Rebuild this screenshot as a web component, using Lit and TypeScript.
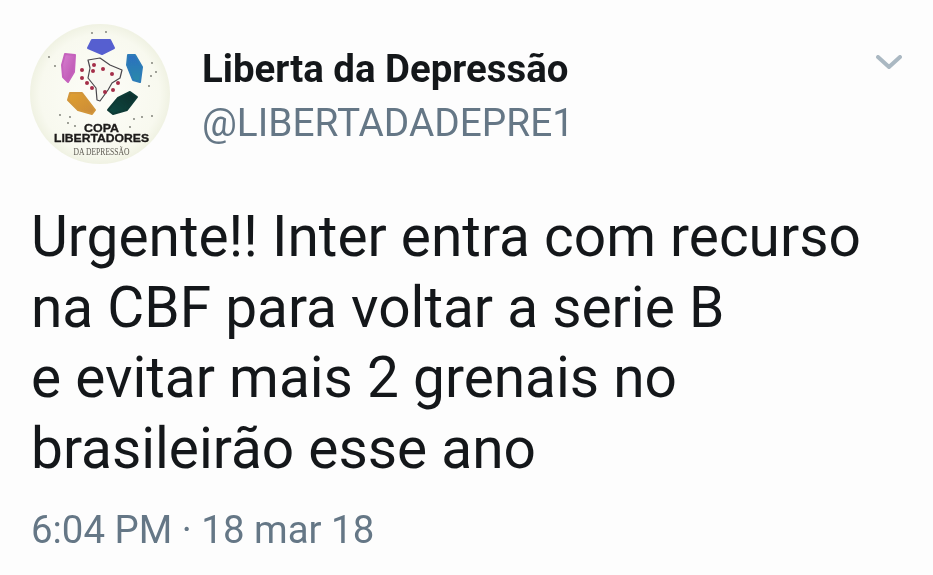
import { LitElement, html, css, svg } from "lit";
import { customElement } from "lit/decorators.js";

const stars: [number, number][] = [
  [64, 41], [63, 47], [73, 45], [82, 50], [52, 46], [52, 54], [57, 59], [62, 64], [88, 59], [83, 66], [75, 68],
];
const specks: [number, number][] = [
  [62, 9], [76, 8], [19, 33], [25, 42], [122, 39], [121, 52], [126, 48], [119, 62], [30, 91], [40, 93], [38, 99],
  [104, 95], [112, 93], [122, 92], [45, 102], [100, 103],
];

const avatar = svg`
<svg class="avatar" viewBox="0 0 140 140" width="140" height="140">
  <defs>
    <radialGradient id="bg" cx="0.5" cy="0.5" r="0.5">
      <stop offset="0" stop-color="#fdfdf8"/><stop offset="0.85" stop-color="#f8f9ef"/><stop offset="1" stop-color="#f0f2e3"/>
    </radialGradient>
    <filter id="soft" x="-10%" y="-10%" width="120%" height="120%"><feGaussianBlur stdDeviation="0.7"/></filter>
    <linearGradient id="mg" x1="0" y1="0" x2="1" y2="1"><stop offset="0" stop-color="#d77fd0"/><stop offset="1" stop-color="#b94fae"/></linearGradient>
    <linearGradient id="or" x1="0" y1="0" x2="1" y2="1"><stop offset="0" stop-color="#e0a02f"/><stop offset="1" stop-color="#c98a3a"/></linearGradient>
    <linearGradient id="bl" x1="0" y1="0" x2="0" y2="1"><stop offset="0" stop-color="#2d6fc0"/><stop offset="1" stop-color="#2a8ba8"/></linearGradient>
    <linearGradient id="dk" x1="1" y1="0" x2="0" y2="1"><stop offset="0" stop-color="#0c2c2a"/><stop offset="1" stop-color="#0e4a42"/></linearGradient>
  </defs>
  <circle cx="70" cy="70" r="70" fill="url(#bg)"/>
  <g filter="url(#soft)">
    <path d="M62 16 L80 16 L84 24 L72 30 L58 24Z" fill="#565fd0" stroke="#565fd0" stroke-width="2" stroke-linejoin="round"/>
    <path d="M35 30 L45 31 L44 48 L38 58 L33 53 L32 41Z" fill="url(#mg)" stroke="#c562bd" stroke-width="2" stroke-linejoin="round"/>
    <path d="M98 31 L105 31 L112 43 L110 58 L103 56 L97 41Z" fill="url(#bl)" stroke="#2d7cb8" stroke-width="2" stroke-linejoin="round"/>
    <path d="M40 69 L52 69 L65 86 L62 90 L48 86 L38 76Z" fill="url(#or)" stroke="#d2963a" stroke-width="2" stroke-linejoin="round"/>
    <path d="M100 68 L107 73 L97 86 L83 90 L78 86 L88 74Z" fill="url(#dk)" stroke="#0e3a36" stroke-width="2" stroke-linejoin="round"/>
    <path d="M58 36 L70 34 L80 41 L92 46 L90 54 L82 59 L78 66 L70 77 L67 76 L66 64 L58 54 L60 44Z" fill="#f8f8f1" stroke="#4a474c" stroke-width="1.2" stroke-linejoin="round"/>
    ${stars.map(([x, y]) => svg`<circle cx=${x} cy=${y} r="2" fill="#a52f48"/>`)}
    ${specks.map(([x, y]) => svg`<circle cx=${x} cy=${y} r="0.9" fill="#77786f"/>`)}
  </g>
  <text class="c1" x="71.5" y="107.7" text-anchor="middle" textLength="35" lengthAdjust="spacingAndGlyphs">COPA</text>
  <text class="c1" x="71.5" y="117.7" text-anchor="middle" textLength="95" lengthAdjust="spacingAndGlyphs">LIBERTADORES</text>
  <text class="c3" x="71.5" y="131" text-anchor="middle" textLength="56" lengthAdjust="spacingAndGlyphs">DA DEPRESSÃO</text>
</svg>`;

@customElement("app-root")
export class AppRoot extends LitElement {
  static styles = css`
    :host { display: block; width: 933px; height: 575px; background: #fdfdfd; font-family: Roboto, "Liberation Sans", sans-serif; overflow: hidden; }
    .tweet { display: flex; flex-direction: column; padding: 24px 30px 0 30px; filter: blur(0.5px); }
    .head { display: flex; align-items: flex-start; }
    .avatar { flex: none; display: block; }
    .c1 { font-family: "Liberation Sans", sans-serif; font-weight: 700; font-size: 11px; fill: #1d1b1a; stroke: #1d1b1a; stroke-width: 0.3px; }
    .c3 { font-family: "Liberation Serif", serif; font-size: 11px; fill: #5d5a52; }
    .who { flex: 1; padding: 21px 0 0 32px; }
    .name { font-size: 38.4px; line-height: 48px; font-weight: 700; color: #14171a; }
    .handle { font-size: 38.8px; line-height: 60px; color: #657786; }
    .chev { flex: none; margin: 31px -1px 0 0; display: block; }
    .text { margin: 38px 0 0 1px; font-size: 56.8px; line-height: 70.7px; color: #14171a; white-space: pre-line; }
    .time { margin: 21px 0 0 1px; font-size: 38.4px; line-height: 48px; color: #657786; }
  `;
  render() {
    return html`<div class="tweet">
      <div class="head">
        ${avatar}
        <div class="who">
          <div class="name">Liberta da Depressão</div>
          <div class="handle">@LIBERTADADEPRE1</div>
        </div>
        <svg class="chev" width="30" height="16" viewBox="0 0 30 16"><path d="M4 2 L15 12 L26 2" fill="none" stroke="#aab8c2" stroke-width="4" stroke-linecap="round" stroke-linejoin="round"/></svg>
      </div>
      <div class="text">Urgente!! Inter entra com recurso
na CBF para voltar a serie B
e evitar mais 2 grenais no
brasileirão esse ano</div>
      <div class="time">6:04 PM · 18 mar 18</div>
    </div>`;
  }
}
